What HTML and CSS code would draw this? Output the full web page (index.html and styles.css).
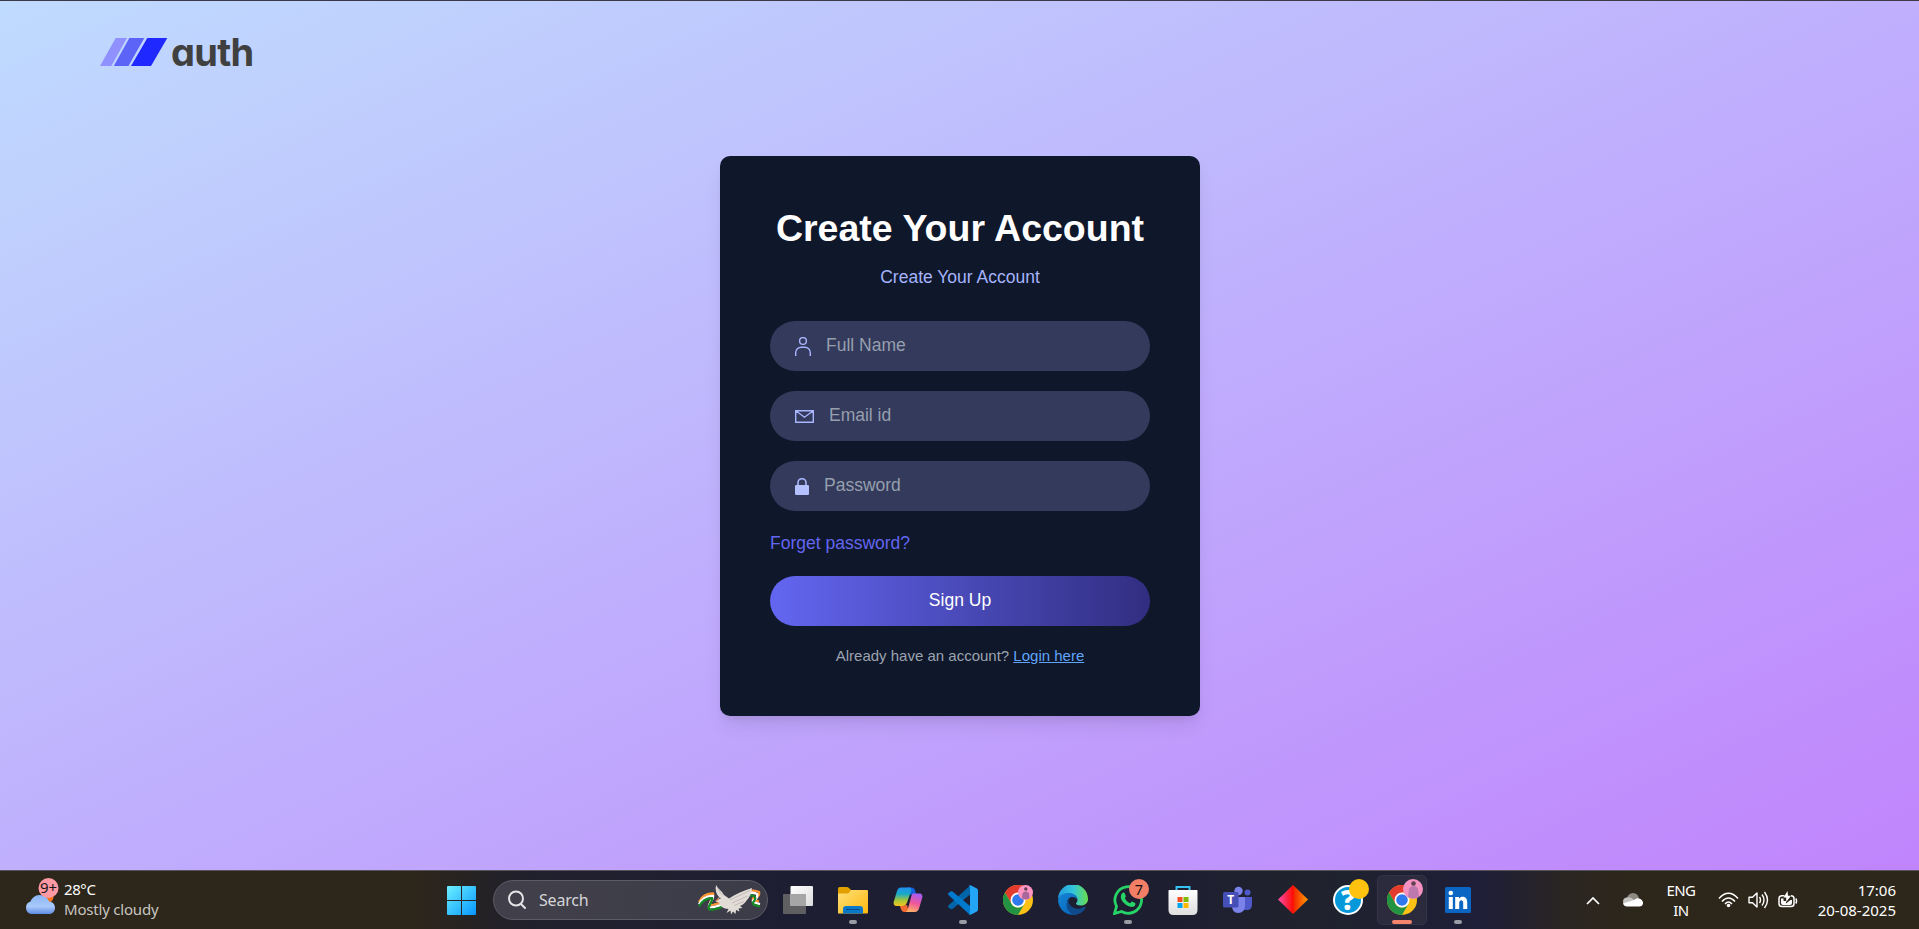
FILE: index.html
```html
<!DOCTYPE html>
<html lang="en">
<head>
<meta charset="utf-8">
<title>Create Your Account</title>
<link rel="stylesheet" href="styles.css">
</head>
<body>
<div class="screen">
  <main class="page">
    <header class="logo">
      <svg class="logo-mark" viewBox="0 0 68 28"><path fill="#9090ff" d="M0 28 15.7 0H27L11.3 28z"/><path fill="#5c64f7" d="M13.8 28 29.3 0H44.3L28.5 28z"/><path fill="#1e28ff" d="M31 28 47.3 0H67.3L51 28z"/></svg>
      <span class="logo-text">auth</span>
    </header>
    <form class="card">
      <h1 class="title">Create Your Account</h1>
      <p class="subtitle">Create Your Account</p>
      <label class="field">
        <svg width="16" height="19" viewBox="0 0 16 19" fill="none" stroke="#a9b5fd" stroke-width="1.4"><circle cx="8" cy="4" r="3.400"/><path d="M.7 19v-3.200a5.600 5.600 0 0 1 5.600-5.600h3.400a5.600 5.600 0 0 1 5.600 5.600V19"/></svg>
        <input class="input" type="text" placeholder="Full Name">
      </label>
      <label class="field">
        <svg width="19" height="13" viewBox="0 0 19 13" fill="none" stroke="#a9b5fd" stroke-width="1.400"><path d="M.7.7h17.600v11.600H.7zM.8.8l8.700 6.400L18.200.8"/></svg>
        <input class="input" type="email" placeholder="Email id">
      </label>
      <label class="field">
        <svg width="14" height="17" viewBox="0 0 14 17"><path d="M3 8V4.700a4 4 0 0 1 8 0V8" fill="none" stroke="#a9b5fd" stroke-width="1.600"/><rect y="7" width="14" height="10" rx="1.300" fill="#b4c0ff"/></svg>
        <input class="input" type="password" placeholder="Password">
      </label>
      <p class="forgot">Forget password?</p>
      <button class="submit" type="button">Sign Up</button>
      <p class="footnote">Already have an account? <span class="login">Login here</span></p>
    </form>
  </main>

  <footer class="taskbar">
    <div class="weather">
      <svg width="36" height="38" viewBox="0 0 36 38"><defs><linearGradient id="cl" x2="0" y2="1"><stop stop-color="#8ab5f7"/><stop offset=".6" stop-color="#a9c9fa"/><stop offset="1" stop-color="#5e8ce6"/></linearGradient></defs><circle cx="24" cy="19" r="5.500" fill="#f97316"/><path fill="url(#cl)" d="M7 36a6.500 6.500 0 0 1-.5-12.500C8 20 11 17 15.500 17c5 0 8.500 3 9.500 6.500 3 0 6 2.500 6 6.200S28.500 36 25 36z"/><circle cx="24.500" cy="10" r="10" fill="#ff99a4"/><text class="badge" x="24.500" y="15.200" text-anchor="middle">9+</text></svg>
      <div class="weather-text"><span class="hot">28°C</span><span>Mostly cloudy</span></div>
    </div>
    <svg class="start" viewBox="0 0 29 29"><defs><linearGradient id="wi" x2="1" y2="1"><stop stop-color="#6bf0ff"/><stop offset="1" stop-color="#0795ff"/></linearGradient></defs><path fill="url(#wi)" d="M1 0h13v14H0V1a1 1 0 0 1 1-1zm14 0h13a1 1 0 0 1 1 1v13H15zM0 15h14v14H1a1 1 0 0 1-1-1zm15 0h14v13a1 1 0 0 1-1 1H15z"/></svg>
    <div class="search">
      <svg width="20" height="20" viewBox="0 0 20 20" fill="none" stroke="#e4e4e7" stroke-width="2" stroke-linecap="round"><circle cx="9" cy="8.500" r="7"/><path d="m14 14 4 4"/></svg>
      <span class="search-text">Search</span>
      <svg class="dove" width="64" height="30" viewBox="0 0 64 30">
        <g fill="none" stroke-width="2.300"><path stroke="#ff9433" d="M1 17C4 11 9 8.500 15 8.500c1.500 4-4 8-3 11 1 2 7-1 12-2M50 6.500c4-1.500 8-1 11 .5 1 4-2 5-6 6.500-1 2 3 2 6 3"/><path stroke="#fff" d="M1 19.300C4 13.300 9 10.800 15 10.800c1 4-5 8-4 11 1 2 8-1 13-2M50 8.500c4-1.500 7-.5 9 .5 1 4-1 5-4 6.500-1 2 3 2.500 7 3.500"/><path stroke="#138a25" d="M1 21.600C4 15.600 8 13.100 14 13.100c1 4-5 8-3 11 2 2 9-1 13-2M52 10.500c3-.5 4 .5 5 1.500 1 3-1 4-2 5.500-1 2 3 3 7 4"/></g>
        <path fill="#e2dcd7" d="M18 0c2 4 6 6 8 10l5 3.500C37 9 45 6 54 3c-.5 5-2 9-5 12-2 3-4 5-7 6l2.500 2-4 .5 1 3-3.500-1.500-.5 4-2.500-2.500-2 3-.5-4-4 2.500 2-4c-5 0-9-3-9.500-6.500l-3.500-1L20 14l1-2c-3-3-4-7-3-12z"/><path d="m32 15 20-9.500M34 18l15.500-7M36 20.500l10-4M19.500 3.500l5 7" stroke="#b9b0ac" fill="none" stroke-width=".8"/><circle cx="21.800" cy="13.300" r=".8" fill="#333"/><path fill="#e66b45" d="m17 16 3-3 1 2z"/>
      </svg>
    </div>
    <div class="apps">
      <div class="app"><svg viewBox="0 0 30 30"><defs><linearGradient id="tv" x2="1" y2="1"><stop stop-color="#fff"/><stop offset="1" stop-color="#dcdcdc"/></linearGradient></defs><rect y="9" width="23" height="20" rx="1" fill="#5f5f62"/><rect x="7.500" y="1" width="22.500" height="20" rx="1" fill="url(#tv)"/><path d="M7.500 9H23v12H7.500z" fill="#a6a6a7"/></svg></div>
      <div class="app open"><svg viewBox="0 0 30 30"><defs><linearGradient id="fo" x2="1" y2="1"><stop stop-color="#ffe07a"/><stop offset="1" stop-color="#fbb80e"/></linearGradient></defs><path fill="#e0a000" d="M0 3.500Q0 2 1.500 2H9q1 0 2 1l2 2v5H0z"/><path fill="url(#fo)" d="M0 8.500h9.500Q11 8.500 13 5h16q1 0 1 1v21.500q0 1-1 1H0z"/><path fill="#0878c8" d="M5 28.500V24q0-3 3-3h14q3 0 3 3v4.500z"/><path stroke="#054c8c" d="M8 24.500h14"/></svg></div>
      <div class="app"><svg viewBox="0 0 30 30"><defs><linearGradient id="c1" x2="0" y2="1"><stop stop-color="#2090ee"/><stop offset=".35" stop-color="#18a9c8"/><stop offset=".7" stop-color="#a8c636"/><stop offset="1" stop-color="#f5c222"/></linearGradient><linearGradient id="c2" x1=".6" x2=".3" y2="1"><stop stop-color="#a85cf2"/><stop offset=".5" stop-color="#ef569a"/><stop offset="1" stop-color="#ffb367"/></linearGradient></defs><path fill="#1460df" d="M14 2.500h4.500c2 0 3 1 3.600 3L23.500 10h-4c-2 0-3-1-3.500-2.500L14 5z"/><path fill="#f26a32" d="m7 21 7-1 2 7h-4c-3 0-4-2-5-6z"/><path fill="url(#c1)" d="M8 2.500h8c2 0 3 2 2 4l-4 11c-1 2.500-2 3.500-5 3.500H4c-3 0-4-2-3-5L4 6c.8-2 1.800-3.500 4-3.500z"/><path fill="url(#c2)" d="M20 8.500h6c3 0 4 2 3 5l-3 10c-.8 2-2 3.500-4 3.500h-9.500c1.500-.5 2-1.500 2.500-3.500l3-11c.5-2 1-3.500 2-4z"/></svg></div>
      <div class="app open"><svg viewBox="0 0 30 30"><path fill="#0065a9" d="M2 18.500.3 20.300q-.6 1 .2 1.700l2 1.500q1 .6 2 0L22 9V0z" transform="translate(0 .5)"/><path fill="#007acc" d="m2 11.500-1.700-1.800q-.6-1 .2-1.700l2-1.500q1-.6 2 0L22 21v9z"/><path fill="#23a5f5" d="M21 .5q1-.7 2 0l5.500 2.700Q30 4 30 5.500v19q0 1.500-1.500 2.300L23 29.500q-1.500.5-2-.5 1 0 1-1V2z"/></svg></div>
      <div class="app"><svg viewBox="0 0 30 30"><g id="chrome"><circle cx="15" cy="15" r="15" fill="#fbc116"/><path fill="#e33b2e" d="M2 7.500A15 15 0 0 1 28 7.500H15L8.500 18.700z"/><path fill="#229342" d="M2 7.500A15 15 0 0 0 15 30l6.500-11.200A7.500 7.500 0 0 1 8.500 18.700z"/><circle cx="15" cy="15" r="7.500" fill="#fff"/><circle cx="15" cy="15" r="5.800" fill="#2f78ed"/></g><circle cx="22.500" cy="7.500" r="7.500" fill="#ff94c3"/><path fill="#a8669a" d="m22 6.500-2.500 1.500-.5 5.500q4 1.500 7.500 0L26 8l-2.500-1.500z"/><circle cx="22.800" cy="4" r="1.700" fill="#604150"/></svg></div>
      <div class="app"><svg viewBox="0 0 30 30"><defs><linearGradient id="e1" x2="1"><stop stop-color="#249bdf"/><stop offset=".5" stop-color="#32c4dc"/><stop offset="1" stop-color="#68de4c"/></linearGradient><linearGradient id="e2" x2=".8" y2="1"><stop stop-color="#1685d8"/><stop offset="1" stop-color="#0866b8"/></linearGradient></defs><path fill="url(#e1)" d="M0 14A15 15 0 0 1 30 14c0 4-3 6.500-7 6.500-3 0-5-.8-5-2 0-.8 1.500-1.200 1.500-3.500C19.500 11.500 16 8.500 11 8.500 6 8.500 2 10.500 0 14z"/><path fill="url(#e2)" d="M0 15C1 10 5.500 8 10.500 8c5.500 0 9 3 9 7-1-2-2.500-3-5-3-4 0-6 3.500-5 8 1 5 5 8.500 10 9A15 15 0 0 1 0 15z"/><path fill="#114a8b" d="M12 12.500c-2 2-2 5 0 7.500 3 4 9 5 14 2 1-.5 2 0 1.500 1a15 15 0 0 1-10 7C9 29 5.500 18 12 12.500z"/></svg></div>
      <div class="app open"><svg viewBox="0 0 30 30"><path d="m1.500 28.500 2-7.200A13.300 13.300 0 1 1 8.500 26.500z" fill="none" stroke="#25d366" stroke-width="2.800"/><path fill="#25d366" d="M10.500 7.500c.8 0 1 .3 1.300 1l1 2.500c.3.700-.5 1.500-1 2.200 1.500 2.800 3 4 5.500 5 .8-.7 1.300-1.900 2-1.600l2.700 1.300c.8.400.5 2-.2 2.900-1.800 2-5 1.200-8-.5-3.300-2-6-5.500-6-8.300 0-2.500 1.500-4.500 2.700-4.500z"/></svg><span class="count">7</span></div>
      <div class="app"><svg viewBox="0 0 30 30"><defs><linearGradient id="st" x2="0" y2="1"><stop stop-color="#fff"/><stop offset="1" stop-color="#dedede"/></linearGradient></defs><path d="M8.500 7V2h13v5" fill="none" stroke="#35c3f2" stroke-width="2"/><path fill="url(#st)" d="M1 5h28q.5 0 .5 1v19q0 5-5 5h-19q-5 0-5-5V6q0-1 .5-1z"/><path fill="#f25022" d="M9.500 12h5v5h-5z"/><path fill="#7fba00" d="M15.500 12h5v5h-5z"/><path fill="#00a4ef" d="M9.500 18h5v5h-5z"/><path fill="#ffb900" d="M15.500 18h5v5h-5z"/></svg></div>
      <div class="app"><svg viewBox="0 0 30 30"><circle cx="24.500" cy="7.500" r="3" fill="#5059c9"/><circle cx="15.500" cy="6" r="4.200" fill="#7b83eb"/><path fill="#5059c9" d="M21 12h8v7q0 6-5 6h-3z"/><path fill="#7b83eb" d="M9 12h13v8q0 8-7 8-6 0-6-8z"/><rect y="7" width="15.500" height="15.500" rx="1.500" fill="#464eb8"/><text class="teams" x="7.700" y="18.500" text-anchor="middle">T</text></svg></div>
      <div class="app"><svg viewBox="0 0 30 30"><defs><linearGradient id="di" x2="1"><stop stop-color="#ff4dac"/><stop offset=".5" stop-color="#ff0c06"/><stop offset=".55" stop-color="#f32a00"/><stop offset="1" stop-color="#ff9d00"/></linearGradient></defs><path fill="url(#di)" d="M15 0 30 14.500 15 29 0 14.500z"/></svg></div>
      <div class="app"><svg class="spill" viewBox="0 0 30 30"><circle cx="15" cy="15" r="14" fill="#0698d9" stroke="#fff" stroke-width="2"/><text class="help" x="15" y="25" text-anchor="middle">?</text></svg><span class="count dot"></span></div>
      <div class="app active"><svg viewBox="0 0 30 30"><use href="#chrome"/></svg><span class="count avatar"><svg viewBox="0 0 20 20"><path fill="#bd78ae" d="m9 7-3 2.500L5 18q6 3 11 0l-1-8.500L12 7z"/><circle cx="10.500" cy="4.500" r="2.300" fill="#604150"/></svg></span></div>
      <div class="app open"><svg viewBox="0 0 30 30"><rect x="2" y="2" width="26" height="26" rx="1.500" fill="#0a66c2"/><circle cx="7.800" cy="8" r="2.300" fill="#fff"/><path fill="#fff" d="M5.800 12h4v12h-4zM12.200 12H16v1.700c2.200-3.200 8.200-2.600 8.200 3.300v7h-4v-6c0-3.700-4-3.500-4 0v6h-4z"/></svg></div>
    </div>
    <div class="tray">
      <svg class="chevron" width="14" height="9" viewBox="0 0 14 9" fill="none" stroke="#fff" stroke-width="1.700"><path d="m1 8 6-6 6 6"/></svg>
      <svg class="cloud" width="21" height="14" viewBox="0 0 21 14"><path fill="#8c8983" d="M4 6a6 6 0 0 1 12 0l2 4H5z"/><path fill="#c5c4c0" d="M4 13A4.300 4.300 0 0 1 3.500 4.500Q8 3 12 8v5z"/><path fill="#fff" d="M4 13.500q-3 0-4-3L11 7q3-3 6.500-1 3 2 2.500 5-1 2.500-3.500 2.500z"/></svg>
      <div class="lang"><span>ENG</span><span>IN</span></div>
      <svg class="wifi" width="21" height="16" viewBox="0 0 21 16" fill="none" stroke="#fff" stroke-width="1.500"><path d="M1 6.500Q10.500-4 20 6.500M4 9.500q6.500-7 13 0M7 12q3.500-3.800 7 0"/><circle cx="10.500" cy="13.500" r="1.800" fill="#fff" stroke="none"/></svg>
      <svg class="volume" width="21" height="18" viewBox="0 0 21 18" fill="none" stroke="#fff" stroke-width="1.400" stroke-linejoin="round"><path d="M1 6.300h3.500L9 2v14l-4.500-4.300H1zM11.500 6q2 3 0 6M14 3.500q4 5.500 0 11M16.500 1q6 8 0 16"/></svg>
      <svg width="20" height="18" viewBox="0 0 20 18"><path d="M6.500 4.700H4Q1 4.700 1 7.500v5.300q0 2.800 3 2.800h9q3 0 3-2.800V7.500q0-2.800-3-2.800M17.800 7.500q1.500 2.500 0 5" fill="none" stroke="#fff" stroke-width="1.500"/><path fill="#fff" d="M3 7.500h2.500V10H8v2.500l4.500-3.500h1.500v3q0 2-2 2H5q-2 0-2-2zM9.500 0 5.500 6.500h2.700v4.500l4.800-6.300h-3z"/></svg>
      <div class="clock"><span>17:06</span><span>20-08-2025</span></div>
    </div>
  </footer>
</div>
</body>
</html>
```
FILE: styles.css
```css
* { box-sizing: border-box; }
html { height: 100%; overflow: hidden; }
body { margin: 0; height: 100%; font-family: "Liberation Sans", Arial, sans-serif; overflow: hidden; }
h1, p { margin: 0; }
svg { display: block; flex: none; }

.screen { height: 929px; display: flex; flex-direction: column; overflow: hidden; }
.page {
  height: 870px;
  flex: none;
  padding-left: 1px;
  border-top: 1px solid #3b3945;
  background: linear-gradient(to bottom right, #bfdbfe, #c084fc);
  display: flex;
  flex-direction: column;
  align-items: center;
}

.logo { align-self: flex-start; display: flex; height: 155px; padding: 37px 0 0 99px; }
.logo-mark { width: 68px; height: 28px; }
.logo-text {
  font: 700 38px/28px Inter, sans-serif;
  font-feature-settings: "cv11";
  letter-spacing: -.7px;
  color: #404040;
  margin: 0 0 0 3px;
}

.card {
  width: 480px;
  height: 560px;
  padding: 50px;
  border-radius: 10px;
  background: #0f172a;
  box-shadow: 0 12px 19px -4px rgb(0 0 0 / .1), 0 5px 8px -5px rgb(0 0 0 / .1);
  font-size: 17.5px;
  line-height: 25px;
  color: #a5b4fc;
}
.title { font-size: 37.5px; line-height: 44px; font-weight: 700; color: #fff; text-align: center; margin-bottom: 15px; white-space: nowrap; }
.subtitle { text-align: center; margin-bottom: 31px; }
.field { display: flex; align-items: center; gap: 15px; height: 50px; padding: 0 25px; margin-bottom: 20px; border-radius: 25px; background: #333a5c; }
.input { flex: 1; min-width: 0; padding: 0; border: 0; outline: 0; background: transparent; font: inherit; height: 25px; margin-bottom: 2px; color: #fff; }
.input::placeholder { color: #969fad; opacity: 1; }
.forgot { color: #6366f1; margin-bottom: 20px; }
.submit { display: block; width: 100%; height: 50px; padding: 0 0 2px; border: 0; border-radius: 25px; background: linear-gradient(to right, #6366f1, #312e81); color: #fff; font: inherit; }
.footnote { margin-top: 20px; font-size: 15px; line-height: 20px; color: #9ca3af; text-align: center; }
.login { color: #60a5fa; text-decoration: underline; }

.taskbar {
  height: 59px;
  flex: none;
  border-top: 1px solid #57535d;
  background: linear-gradient(to right, #2d261a 0 410px, #20202d 530px, #1e1e33 800px, #1e1e31 1180px, #20232d 1310px, #1e1e38 1480px, #2b2621 1570px, #2d261a 1640px);
  display: flex;
  align-items: center;
  font: 15px/20px "Noto Sans", sans-serif;
  color: #fff;
}
.weather { width: 447px; padding: 0 0 4px 24px; display: flex; align-items: flex-start; }
.weather-text { display: flex; flex-direction: column; margin: 1px 0 0 4px; color: #c7c5c1; letter-spacing: -.2px; }
.hot { color: #fff; letter-spacing: -.4px; }
.badge { font: 15px "Noto Sans", sans-serif; fill: #161616; }
.start { width: 29px; height: 29px; margin-top: 1px; }
.search { width: 275px; height: 40px; margin: 0 2px 0 17px; padding: 0 5px 0 13px; display: flex; align-items: center; border: 1px solid #5c5c66; border-radius: 20px; background: linear-gradient(to right, #41404a, #3c3c49); }
.search-text { margin-left: 12px; flex: 1; font-size: 16px; color: #d5d5d8; letter-spacing: -.2px; }
.apps { display: flex; }
.app { width: 55px; height: 58px; padding-top: 14px; display: flex; flex-direction: column; align-items: center; position: relative; }
.app > svg { width: 30px; height: 30px; }
.app > .spill { overflow: visible; }
.app.open::after, .app.active::after { content: ""; width: 8px; height: 4px; margin-top: 5px; border-radius: 2px; background: #9b9ba5; }
.app.active { height: 50px; width: 50px; margin: 4px 3px 0 2px; padding-top: 10px; border: 1px solid #343447; border-radius: 5px; background: #2b2b3d; }
.app.active > svg { margin-top: -1px; }
.app.active::after { width: 20px; background: #f4846b; }
.count { position: absolute; left: 29px; top: 8px; width: 20px; height: 20px; border-radius: 50%; background: #f37e66; color: #111; text-align: center; font-size: 14.5px; line-height: 20px; }
.dot { background: #ffc20e; }
.app .avatar { left: 25px; top: 3px; background: #f493c1; overflow: hidden; }
.teams { font: 700 12px "Noto Sans", sans-serif; fill: #fff; }
.help { font: 800 28px "Open Sans", sans-serif; fill: #fff; }
.tray { margin-left: auto; padding-right: 23px; display: flex; align-items: center; }
.chevron { margin-right: 23px; }
.cloud { margin-right: 20px; }
.lang { width: 34px; margin-right: 20px; text-align: center; display: flex; flex-direction: column; letter-spacing: -.6px; }
.wifi { margin-right: 9px; }
.volume { margin-right: 9px; }
.clock { width: 98px; display: flex; flex-direction: column; align-items: flex-end; }
```
